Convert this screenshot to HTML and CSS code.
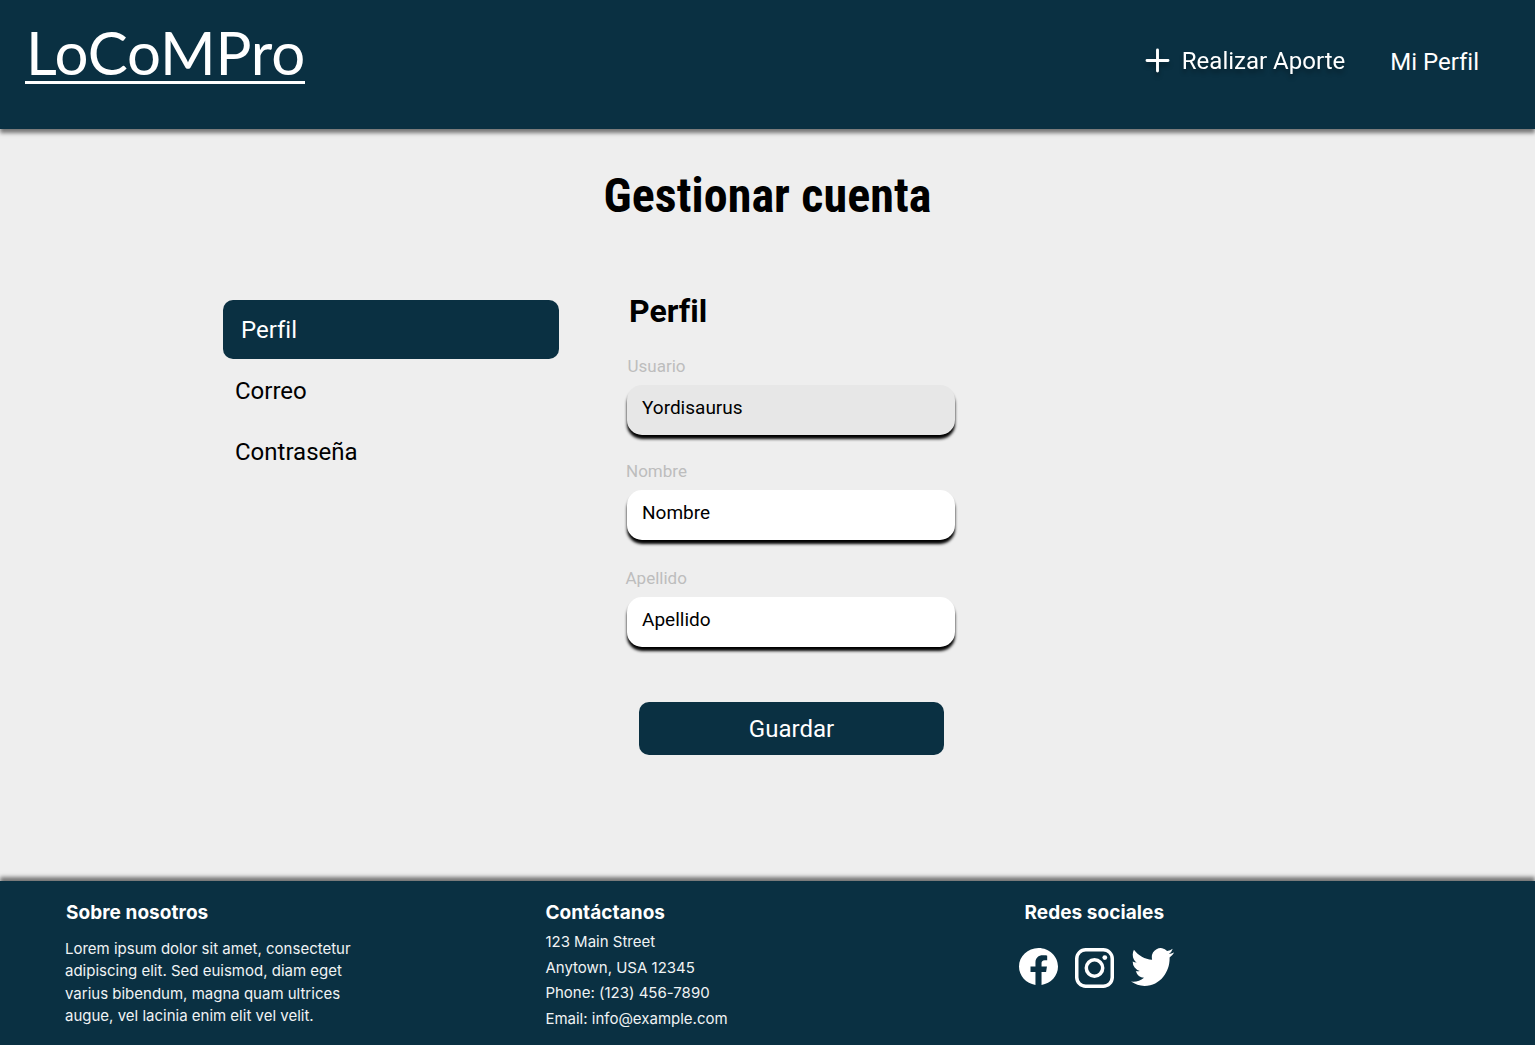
FILE: index.html
```html
<!DOCTYPE html>
<html lang="es">
<head>
<meta charset="utf-8">
<title>LoCoMPro - Gestionar cuenta</title>
<link rel="stylesheet" href="styles.css">
</head>
<body>
<header class="header">
  <a class="logo"><span class="logo-text">LoCoMPro</span></a>
  <nav class="nav">
    <a class="nav-add">
      <svg class="plus" width="25" height="25" viewBox="0 0 25 25"><path d="M12.5 2v21M2 12.5h21" fill="none" stroke="#fff" stroke-width="2.9" stroke-linecap="round"/></svg>
      <span>Realizar Aporte</span>
    </a>
    <a class="nav-profile">Mi Perfil</a>
  </nav>
</header>
<main class="main">
  <h1 class="title"><span class="title-text">Gestionar cuenta</span></h1>
  <div class="columns">
    <ul class="menu">
      <li class="menu-item active">Perfil</li>
      <li class="menu-item">Correo</li>
      <li class="menu-item">Contraseña</li>
    </ul>
    <form class="form">
      <h2 class="form-title">Perfil</h2>
      <label class="label user">Usuario</label>
      <div class="input readonly">Yordisaurus</div>
      <label class="label name">Nombre</label>
      <div class="input">Nombre</div>
      <label class="label surname">Apellido</label>
      <div class="input">Apellido</div>
      <button class="save" type="button">Guardar</button>
    </form>
  </div>
</main>
<footer class="footer">
  <section class="about">
    <h3 class="foot-title">Sobre nosotros</h3>
    <p class="about-text">Lorem ipsum dolor sit amet, consectetur<br>adipiscing elit. Sed euismod, diam eget<br>varius bibendum, magna quam ultrices<br>augue, vel lacinia enim elit vel velit.</p>
  </section>
  <section class="contact">
    <h3 class="foot-title">Contáctanos</h3>
    <p class="contact-text">123 Main Street<br>Anytown, USA 12345<br>Phone: (123) 456-7890<br>Email: info@example.com</p>
  </section>
  <section class="social">
    <h3 class="foot-title">Redes sociales</h3>
    <div class="icons">
      <svg width="39" height="37" viewBox="0 0 24 24" preserveAspectRatio="none"><path fill="#fff" d="M24 12.07C24 5.4 18.63 0 12 0S0 5.4 0 12.07C0 18.1 4.39 23.1 10.13 24v-8.44H7.08v-3.49h3.05V9.41c0-3.02 1.79-4.7 4.53-4.7 1.31 0 2.68.24 2.68.24v2.97h-1.51c-1.49 0-1.96.93-1.96 1.89v2.26h3.33l-.53 3.49h-2.8V24C19.61 23.1 24 18.1 24 12.07"/></svg>
      <svg width="39" height="40" viewBox="0 0 39 40"><rect x="1.75" y="1.75" width="35.5" height="36.5" rx="9" fill="none" stroke="#fff" stroke-width="3.5"/><circle cx="19.5" cy="20" r="8.2" fill="none" stroke="#fff" stroke-width="3.5"/><circle cx="29.8" cy="9.6" r="2.4" fill="#fff"/></svg>
      <svg width="43" height="38" viewBox="0 2.2 24 19.6" preserveAspectRatio="none"><path fill="#fff" d="M23.95 4.57a10 10 0 0 1-2.82.77 4.96 4.96 0 0 0 2.16-2.72c-.95.55-2 .95-3.13 1.18a4.92 4.92 0 0 0-8.38 4.48C7.69 8.1 4.07 6.13 1.64 3.16a4.82 4.82 0 0 0-.67 2.48c0 1.71.87 3.21 2.19 4.1a4.9 4.9 0 0 1-2.23-.62v.06a4.92 4.92 0 0 0 3.95 4.83 5 5 0 0 1-2.21.08 4.94 4.94 0 0 0 4.6 3.42A9.87 9.87 0 0 1 0 19.54a13.99 13.99 0 0 0 7.55 2.21c9.05 0 14-7.5 14-13.98 0-.21 0-.42-.02-.63a9.94 9.94 0 0 0 2.46-2.55z"/></svg>
    </div>
  </section>
</footer>
</body>
</html>
```
FILE: styles.css
```css
* { box-sizing: border-box; }
body {
  margin: 0;
  height: 1045px;
  display: flex;
  flex-direction: column;
  background: #eee;
  color: #000;
  font-family: Roboto, sans-serif;
  font-variant-ligatures: none;
}
h1, h2, h3, p, ul { margin: 0; padding: 0; }
.header {
  height: 129px;
  display: flex;
  justify-content: space-between;
  align-items: flex-start;
  padding: 20px 56px 0 25px;
  background: #0a3042;
  color: #fff;
  box-shadow: 0 4px 4px rgba(0, 0, 0, .5);
}
.logo {
  width: 280px;
  height: 64px;
  border-bottom: 3px solid #fff;
  padding-left: 1px;
}
.logo-text {
  display: block;
  font: 400 60px/64px Lato, sans-serif;
  letter-spacing: -.2px;
  white-space: nowrap;
}
.nav {
  display: flex;
  padding-top: 25px;
  font-size: 24px;
  line-height: 32px;
}
.nav-add {
  display: flex;
  gap: 12px;
  margin-right: 45px;
  filter: drop-shadow(0 4px 2px rgba(0, 0, 0, .3));
}
.plus { margin-top: 3px; }
.nav-profile { padding-top: 1px; }
.main { flex: 1; }
.title {
  padding-top: 35px;
  text-align: center;
  font: 700 48px/64px "Roboto Condensed", Roboto, sans-serif;
  font-stretch: 75%;
}
.title-text { display: inline-block; letter-spacing: .1px; }
.columns {
  display: flex;
  gap: 68px;
  padding: 62px 0 0 223px;
}
.menu {
  width: 336px;
  padding-top: 10px;
  list-style: none;
  font-size: 24px;
}
.menu-item { height: 61px; padding-left: 12px; line-height: 65px; }
.menu-item.active {
  height: 59px;
  padding-left: 18px;
  line-height: 61px;
  border-radius: 10px;
  background: #0a3042;
  color: #fff;
}
.form { width: 328px; }
.form-title { padding-left: 2px; font-size: 32px; line-height: 42px; }
.label {
  display: block;
  font-size: 17px;
  line-height: 20px;
  color: #bdbdbd;
}
.user { margin: 24px 0 9px .5px; }
.name { margin: 26px 0 9px -1px; }
.surname { margin: 28px 0 9px -1.5px; }
.input {
  height: 50px;
  padding-left: 15px;
  border-radius: 15px;
  background: #fff;
  font-size: 19px;
  line-height: 45px;
  box-shadow: 0 4px 3px #000;
}
.readonly { background: #e7e7e7; }
.save {
  display: block;
  width: 305px;
  height: 53px;
  margin: 55px 0 0 12px;
  padding: 2px 0 0;
  border: 0;
  border-radius: 10px;
  background: #0a3042;
  color: #fff;
  font: 24px/51px Roboto, sans-serif;
}
.footer {
  height: 164px;
  display: grid;
  grid-template-columns: 480px 474px 1fr;
  padding: 20px 0 0 65px;
  background: #0a3042;
  color: #fff;
  font-family: Inter, sans-serif;
  box-shadow: 0 -4px 4px rgba(0, 0, 0, .5);
}
.foot-title { font-size: 19px; line-height: 24px; letter-spacing: .06px; }
.about .foot-title { padding-left: 1px; }
.contact { padding-left: .4px; }
.social .foot-title { padding-left: 5.5px; }
.about-text, .contact-text { font-size: 15px; color: #f0f3f4; }
.about-text { padding-top: 13.4px; line-height: 22.1px; }
.contact-text { padding-top: 4.2px; line-height: 25.6px; }
.icons { display: flex; gap: 17px; padding-top: 23px; }
```
